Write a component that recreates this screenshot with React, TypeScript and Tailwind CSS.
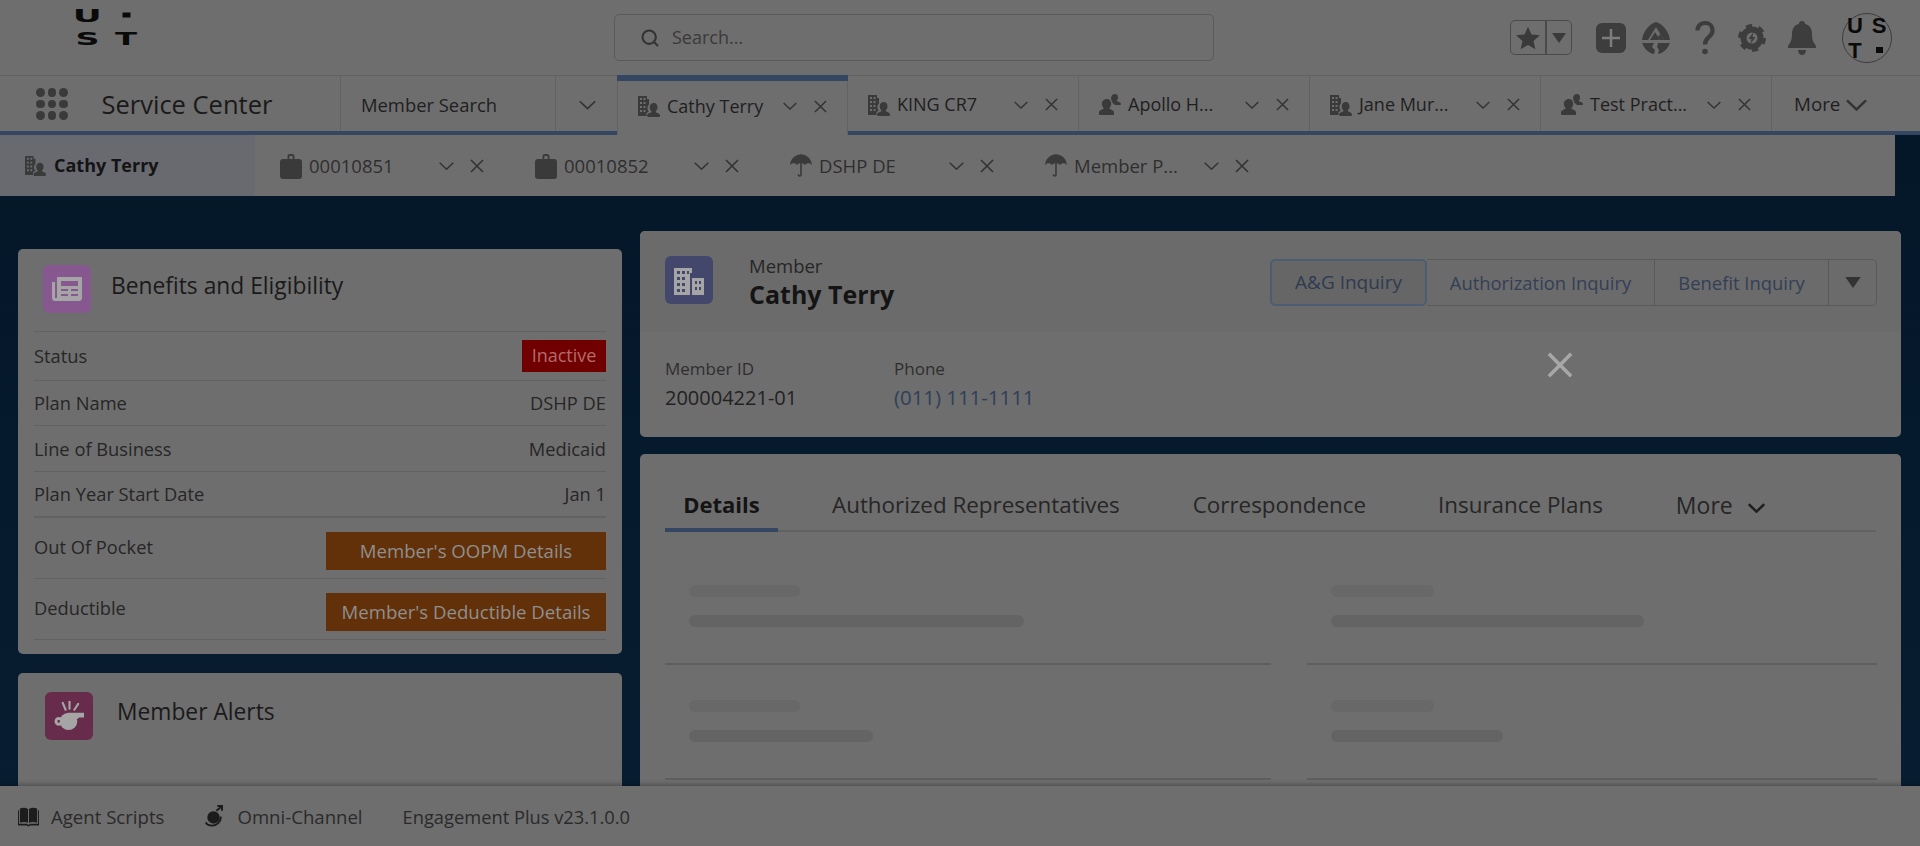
import React from 'react';
import { Search } from 'lucide-react';

const FONT = "font-['Open_Sans','Noto_Sans',sans-serif]";

const Chevron = ({ className = '', weight = 1.5 }: { className?: string; weight?: number }) => (
  <svg viewBox="0 0 15 8" className={`shrink-0 ${className}`} fill="none" stroke="currentColor" strokeWidth={weight}>
    <path d="M.7.7l6.800 6.500L14.300.7" />
  </svg>
);

const Cross = ({ className = '', weight = 1.6 }: { className?: string; weight?: number }) => (
  <svg viewBox="0 0 14 14" className={`shrink-0 ${className}`} fill="none" stroke="currentColor" strokeWidth={weight}>
    <path d="M1 1l12 12M13 1L1 13" />
  </svg>
);

const BuildingPerson = ({ className = '' }: { className?: string }) => (
  <svg viewBox="0 0 22 22" className={className} fill="currentColor">
    <path fillRule="evenodd" d="M0 1h9v3h2v5.500c-1.200 1-1.800 2.600-1.500 4.500.2 1.200.7 2 1.300 2.700-.7.400-1.600.800-2.300 1.300v3H0zM2 3v2h2V3zm3.500 0v2h2V3zM2 7v2h2V7zm3.500 0v2h2V7zM2 11v2h2v-2zm3.500 0v2h2v-2zM2 15v2h2v-2zm3.500 0v2h2v-2z" />
    <path d="M15.800 8c2.300 0 3.700 1.900 3.700 4.300 0 1.600-.7 2.900-1.500 3.800-.3.400-.3 1 .2 1.300 1.400.7 3.800 1 3.800 3.100 0 .8-.3 1.500-1 1.500H10.500c-.8 0-1.500-.6-1.500-1.400 0-2.100 2.600-2.500 4-3.200.5-.3.500-.9.200-1.300-.9-.9-1.500-2.200-1.500-3.800C11.700 9.900 13.400 8 15.800 8z" />
  </svg>
);

const PersonGroup = ({ className = '' }: { className?: string }) => (
  <svg viewBox="0 0 22 22" className={className} fill="currentColor">
    <path d="M16 0c1.900 0 3 1.500 3 3.400 0 1.200-.5 2.200-1.100 2.900-.3.400-.2.800.2 1 1.200.6 3.900 1 3.900 2.900 0 .5-.3.800-.9.800h-5.300c-.5-1-1.600-1.700-2.500-2.200-.2-.1-.3-.4-.1-.6.3-.3.200-.6 0-.9-.7-.7-1.100-1.700-1.100-2.900C12 1.500 13.900 0 16 0z" />
    <path d="M8 5c2.500 0 4.200 2 4.200 4.700 0 1.700-.7 3-1.500 4-.4.500-.3 1 .2 1.300 1.500.8 4.100 1.300 4.100 3.500v1.500c0 .6-.5 1-1 1H1c-.6 0-1-.4-1-1v-1.500c0-2.200 2.600-2.700 4.200-3.500.5-.3.600-.8.200-1.300-.9-1-1.500-2.300-1.500-4C2.900 7 5.400 5 8 5z" />
  </svg>
);

const Briefcase = ({ className = '' }: { className?: string }) => (
  <svg viewBox="0 0 22 26" className={className} fill="currentColor">
    <path d="M7.500 6V3.500C7.500 1.800 8.700 1 10 1h2c1.300 0 2.500.8 2.500 2.500V6h-1.800V3.800c0-.6-.4-.9-.9-.9h-1.600c-.5 0-.9.300-.9.900V6z" />
    <rect x="0" y="6" width="22" height="20" rx="3" />
  </svg>
);

const Umbrella = ({ className = '' }: { className?: string }) => (
  <svg viewBox="0 0 24 28" className={className} fill="currentColor">
    <path d="M11 1.500C11 .7 13 .7 13 1.500 19 2 23.500 6.500 24 13c-1.200-1.300-2.500-2-3.900-2-1.500 0-2.700.7-3.700 2-1-1.300-2.400-2-4.400-2s-3.400.7-4.400 2c-1-1.300-2.200-2-3.700-2C2.500 11 1.200 11.700 0 13 .5 6.500 5 2 11 1.500z" />
    <path d="M12 11v12.500c0 1.800-2.800 1.800-2.800 0" fill="none" stroke="currentColor" strokeWidth="1.800" strokeLinecap="round" />
  </svg>
);

const WorkspaceTab = ({ label, icon, active }: { label: string; icon: React.ReactNode; active?: boolean }) => (
  <div
    className={`w-[231px] flex items-center pl-5 pr-5 relative pt-[2px] ${
      active ? 'h-[60px] self-start -mt-px bg-[#6e6e6e] border-x border-[#626262] z-10' : 'h-full border-r border-[#626262]'
    }`}
  >
    {active && <div className="absolute top-0 -left-px -right-px h-[6px] bg-[#344661]" />}
    {icon}
    <span className="ml-[7px] flex-1 text-[18px] text-[#1f1f1f] whitespace-nowrap">{label}</span>
    <Chevron className="w-[14px] h-[8px] text-[#333333]" />
    <Cross className="w-[13px] h-[13px] ml-[17px] text-[#333333]" />
  </div>
);

const SubTab = ({ label, icon }: { label: string; icon: React.ReactNode }) => (
  <div className="w-[255px] h-full flex items-center pl-[25px] pr-[26px] shrink-0">
    {icon}
    <span className="ml-[7px] flex-1 text-[18.500px] text-[#2e2e2e] whitespace-nowrap">{label}</span>
    <Chevron className="w-[15px] h-[8px] text-[#333333]" />
    <Cross className="w-[14px] h-[14px] ml-4 text-[#333333]" />
  </div>
);

const Row = ({ label, value, height = 'h-[45.500px]' }: { label: string; value: React.ReactNode; height?: string }) => (
  <div className={`flex items-center justify-between ${height} border-t border-[#626262] text-[18.300px] text-[#262626]`}>
    <span>{label}</span>
    {value}
  </div>
);

const ActionRow = ({ label, action }: { label: string; action: string }) => (
  <div className="flex items-start justify-between h-[61px] border-t border-[#626262] text-[18.300px] text-[#262626]">
    <span className="mt-[15px]">{label}</span>
    <button className="mt-[14px] w-[280px] h-[38px] bg-[#623109] text-[#8f8f8f] text-[18.600px]">{action}</button>
  </div>
);

const Skeleton = ({ w1, w2, lineW, top }: { w1: string; w2: string; lineW: string; top: string }) => (
  <div className={`${lineW} ${top} border-b-2 border-[#5e5e5e] pl-6`}>
    <div className={`${w1} h-3 rounded-full bg-[#686868]`} />
    <div className={`${w2} h-3 mt-[18px] rounded-full bg-[#646464]`} />
  </div>
);

export default function App() {
  const bi = <BuildingPerson className="w-[22px] h-[22px] text-[#3a3a3a] shrink-0" />;
  const pg = <PersonGroup className="w-[22px] h-[22px] text-[#3a3a3a] shrink-0" />;
  const bc = <Briefcase className="w-[22px] h-[26px] text-[#3a3a3a] shrink-0" />;
  const um = <Umbrella className="w-[22px] h-[26px] text-[#3a3a3a] shrink-0" />;

  return (
    <div className={`${FONT} w-[1920px] h-[846px] overflow-hidden flex flex-col bg-[#6e6e6e] relative`}>
      {/* global header */}
      <header className="h-[75px] shrink-0 flex items-center relative">
        <div className="w-[614px] h-full pl-[72px]">
          {/* logo, wide lettering */}
          <svg viewBox="0 0 70 46" className="w-[70px] h-[46px] mt-[6px] font-['DejaVu_Sans',sans-serif] font-bold text-[18.400px]" fill="#0a0a0a">
            <text x="0.800" y="16" textLength="29" lengthAdjust="spacingAndGlyphs">U</text>
            <rect x="50.500" y="6.500" width="8" height="5" />
            <text x="3.500" y="38.500" textLength="24" lengthAdjust="spacingAndGlyphs">S</text>
            <text x="43" y="38.500" textLength="22" lengthAdjust="spacingAndGlyphs">T</text>
          </svg>
        </div>
        <div className="w-[600px] h-[47px] rounded-[5px] border border-[#5a5a5a] flex items-center pl-[25px]">
          <Search className="w-5 h-5 text-[#333333]" strokeWidth={2.500} />
          <span className="ml-3 text-[18px] text-[#3a3a3a]">Search...</span>
        </div>
        <div className="ml-[296px] w-[62px] h-[35px] rounded-[5px] border border-[#4a4a4a] flex text-[#3a3a3a]">
          <div className="w-9 flex items-center justify-center border-r-2 border-[#4a4a4a]">
            <svg viewBox="0 0 24 24" className="w-[26px] h-[26px]" fill="currentColor">
              <path d="M12 1.500l3.200 7.200 7.800.8-5.900 5.200 1.700 7.700L12 18.400l-6.800 4 1.700-7.700L1 9.500l7.800-.8z" />
            </svg>
          </div>
          <div className="flex-1 flex items-center justify-center">
            <svg viewBox="0 0 14 10" className="w-[14px] h-[10px]" fill="currentColor"><path d="M0 0h14L7 10z" /></svg>
          </div>
        </div>
        <div className="ml-6 w-[30px] h-[30px] rounded-[6px] bg-[#3d3d3d] flex items-center justify-center">
          <svg viewBox="0 0 20 20" className="w-5 h-5" fill="none" stroke="#7d7d7d" strokeWidth="2.500"><path d="M10 1v18M1 10h18" /></svg>
        </div>
        <svg viewBox="0 0 28 34" className="ml-4 w-7 h-[34px] text-[#3d3d3d]" fill="currentColor">
          <path d="M14 1C21 3 27 11 28 19H22L14 6 6 19H0C1 11 7 3 14 1z" />
          <path d="M13 11l-5 8h10zM18 13l-2 3 2.500 3H22z" />
          <path d="M0 22h12l-2 4 3 3-1 4C6 32 2 27 0 22zM16 22h12c-2 5-6 10-12 11l1-4-2-3z" />
        </svg>
        <svg viewBox="0 0 20 34" className="ml-[25px] w-[20px] h-[34px] text-[#3d3d3d]" fill="none" stroke="currentColor" strokeWidth="4.200">
          <path d="M2.500 9.500c0-10 15-10 15 0 0 7-7.500 6-7.500 14" />
          <circle cx="10" cy="30.500" r="2.800" fill="currentColor" stroke="none" />
        </svg>
        <svg viewBox="0 0 28 28" className="ml-[23px] w-7 h-7 text-[#3d3d3d]" fill="none" stroke="currentColor">
          <circle cx="14" cy="14" r="8.500" strokeWidth="6" />
          <circle cx="14" cy="14" r="12" strokeWidth="4" strokeDasharray="6 6.566" />
          <path d="M15.500 8l-5 7h3l-1 5 5-7h-3z" fill="currentColor" stroke="none" />
        </svg>
        <svg viewBox="0 0 28 34" className="ml-[22px] w-7 h-[34px] text-[#3d3d3d]" fill="currentColor">
          <path d="M14 0c2 0 3 1 3 3 5 1 7 5 7 10 0 7 2 9 4 12v2H0v-2c2-3 4-5 4-12 0-5 2-9 7-10 0-2 1-3 3-3zM10 29h8c0 3-2 5-4 5s-4-2-4-5z" />
        </svg>
        <div className="ml-[26px] w-[50px] h-[50px] rounded-full border border-[#3d3d3d] grid grid-cols-2 text-[#0a0a0a] font-['Liberation_Sans',sans-serif] font-bold text-[22px] leading-[25px] text-center content-center">
          <span>U</span>
          <span>S</span>
          <span>T</span>
          <span className="flex items-center justify-center"><span className="block w-[7px] h-[6px] bg-[#0a0a0a]" /></span>
        </div>
      </header>

      {/* app nav */}
      <nav className="h-[60px] shrink-0 border-t border-[#626262] border-b-4 border-b-[#344661] flex items-center">
        <div className="w-[341px] h-full flex items-center border-r border-[#626262] pl-9 pt-[1px]">
          <div className="grid grid-cols-3 gap-x-[3px] gap-y-[3px]">
            {Array.from({ length: 9 }).map((_, i) => (
              <span key={i} className="w-[8.500px] h-[8.500px] rounded-full bg-[#3a3a3a]" />
            ))}
          </div>
          <span className="ml-[34px] text-[25.500px] text-[#1a1a1a] whitespace-nowrap">Service Center</span>
        </div>
        <div className="w-[215px] h-full flex items-center border-r border-[#626262] pl-5 pt-[2px]">
          <span className="text-[18.400px] text-[#1f1f1f]">Member Search</span>
        </div>
        <div className="w-[61px] h-full flex items-center pl-[23px] pt-[2px]">
          <Chevron className="w-[17px] h-[10px] text-[#333333]" />
        </div>
        <WorkspaceTab label="Cathy Terry" icon={bi} active />
        <WorkspaceTab label="KING CR7" icon={bi} />
        <WorkspaceTab label="Apollo H..." icon={pg} />
        <WorkspaceTab label="Jane Mur..." icon={bi} />
        <WorkspaceTab label="Test Pract..." icon={pg} />
        <div className="pl-[22px] pt-[2px] flex items-center text-[18.800px] text-[#1f1f1f]">
          More
          <Chevron className="w-[21px] h-[12px] ml-[6px] text-[#333333]" weight={1.7} />
        </div>
      </nav>

      {/* body */}
      <div className="flex-1 min-h-0 overflow-hidden bg-gradient-to-b from-[#041729] to-[#091d32]">
        <div className="w-[1895px] h-[61px] bg-[#6e6e6e] flex items-center">
          <div className="w-[255px] h-full bg-[#686a70] flex items-center pl-[25px]">
            <BuildingPerson className="w-[21px] h-[21px] text-[#3a3a3a]" />
            <span className="ml-[8px] text-[18px] font-bold text-[#141414]">Cathy Terry</span>
          </div>
          <div className="flex h-full">
            <SubTab label="00010851" icon={bc} />
            <SubTab label="00010852" icon={bc} />
            <SubTab label="DSHP DE" icon={um} />
            <SubTab label="Member P..." icon={um} />
          </div>
        </div>

        <div className="flex items-start pl-[18px]">
          {/* left column */}
          <div className="w-[604px] mt-[53px] flex flex-col gap-[19px]">
            <section className="h-[405px] bg-[#6e6e6e] rounded-[5px] px-4">
              <div className="h-[82px] flex items-start pl-[9px] pt-[16px]">
                <div className="w-12 h-12 rounded-[6px] bg-[#86588f] flex items-center justify-center">
                  <svg viewBox="0 0 30 24" className="w-[30px] h-6" fill="#a5a5a5" fillRule="evenodd">
                    <path d="M5 0h25v21c0 1.700-1.300 3-3 3H3c-1.700 0-3-1.300-3-3V5h3v16h2zM9 4v5h17V4zm0 8v2h7v-2zm10 0v2h7v-2zM9 17v2h7v-2zm10 0v2h7v-2z" />
                  </svg>
                </div>
                <h2 className="ml-5 mt-[4px] text-[22.800px] text-[#1a1a1a]">Benefits and Eligibility</h2>
              </div>
              <Row
                height="h-[48.500px]"
                label="Status"
                value={<span className="w-[84px] h-8 bg-[#700000] text-[#b46a6a] text-[18px] flex items-center justify-center">Inactive</span>}
              />
              <Row label="Plan Name" value={<span>DSHP DE</span>} />
              <Row label="Line of Business" value={<span>Medicaid</span>} />
              <Row label="Plan Year Start Date" value={<span>Jan 1</span>} />
              <div className="border-t border-[#626262]" />
              <ActionRow label="Out Of Pocket" action="Member's OOPM Details" />
              <ActionRow label="Deductible" action="Member's Deductible Details" />
              <div className="border-t border-[#626262]" />
            </section>

            <section className="h-[200px] bg-[#6e6e6e] rounded-[5px] pl-[27px] pt-[19px] flex items-start">
              <div className="w-12 h-12 rounded-[6px] bg-[#672b4b] flex items-center justify-center">
                <svg viewBox="0 0 32 32" className="w-[31px] h-[31px]" fill="#a5a5a5" stroke="none">
                  <circle cx="15" cy="21" r="9" />
                  <path d="M15 12h16v5h-5l-4 3-7-3z" />
                  <path fillRule="evenodd" d="M5 16.500a4.500 4.500 0 110 9 4.500 4.500 0 010-9zm0 3a1.500 1.500 0 100 3 1.500 1.500 0 000-3z" />
                  <path d="M9 2l3 7M16 0v8M25 3l-4 6" stroke="#a5a5a5" strokeWidth="2.200" strokeLinecap="round" />
                </svg>
              </div>
              <h2 className="ml-6 mt-[3px] text-[22.800px] text-[#1a1a1a]">Member Alerts</h2>
            </section>
          </div>

          {/* right column */}
          <div className="w-[1261px] ml-[18px] mt-[35px] flex flex-col gap-[17px]">
            <section className="h-[206px] rounded-[5px] overflow-hidden bg-[#6e6e6e] relative">
              <div className="h-[101px] bg-[#6b6b6b] flex items-start pl-[25px] pr-6">
                <div className="mt-[25px] w-12 h-12 rounded-[6px] bg-[#43476b] flex items-center justify-center">
                  <svg viewBox="0 0 30 30" className="w-[30px] h-[30px]" fill="#a5a5a5" fillRule="evenodd">
                    <path d="M0 3h18v5h-2v22H0zM3 6v3h3V6zm5 0v3h3V6zm5 0v3h2V6zM3 12v3h3v-3zm5 0v3h3v-3zM3 18v3h3v-3zm5 0v3h3v-3zM3 24v3h3v-3zm5 0v3h3v-3z" />
                    <path d="M18 13h12v17H18zm3 3v3h2v-3zm4 0v3h2v-3zm-4 6v3h2v-3zm4 0v3h2v-3z" />
                  </svg>
                </div>
                <div className="ml-[36px] mt-[23px]">
                  <div className="text-[18.500px] leading-6 text-[#262626]">Member</div>
                  <div className="text-[25px] leading-8 font-bold text-[#141414]">Cathy Terry</div>
                </div>
                <div className="ml-auto mt-[28px] flex h-[47px] text-[18.400px] text-[#333f56]">
                  <button className="w-[157px] rounded-[5px] border-2 border-[#4c5d73] bg-[#666666] text-[#2f3a50] text-[19px]">A&amp;G Inquiry</button>
                  <button className="w-[228px] border-y border-r border-[#5a5a5a]">Authorization Inquiry</button>
                  <button className="w-[174px] border-y border-r border-[#5a5a5a]">Benefit Inquiry</button>
                  <button className="w-[48px] rounded-r-[5px] border-y border-r border-[#5a5a5a] flex items-center justify-center">
                    <svg viewBox="0 0 14 10" className="w-[16px] h-[11px]" fill="#333333"><path d="M0 0h14L7 10z" /></svg>
                  </button>
                </div>
              </div>
              <div className="flex pl-[25px] pt-[24px]">
                <div className="w-[229px]">
                  <div className="text-[17px] leading-[26px] text-[#2e2e2e]">Member ID</div>
                  <div className="text-[20px] leading-[31px] text-[#222222]">200004221-01</div>
                </div>
                <div>
                  <div className="text-[17px] leading-[26px] text-[#2e2e2e]">Phone</div>
                  <div className="text-[20.400px] leading-[31px] text-[#2e4059]">(011) 111-1111</div>
                </div>
              </div>
              {/* modal close button */}
              <Cross className="absolute left-[907px] top-[121px] w-[26px] h-[26px] text-[#a8a8a8]" weight={1.9} />
            </section>

            <section className="h-[340px] rounded-[5px] bg-[#6e6e6e] px-[25px] pt-[24px]">
              <div className="flex h-[54px] border-b-2 border-[#626262] text-[22.400px] text-[#262626]">
                <div className="w-[113px] h-[54px] border-b-4 border-[#344661] flex justify-center pt-[10px] text-[22px] font-bold text-[#141414]">Details</div>
                <div className="pt-[10px] ml-[54px]">Authorized Representatives</div>
                <div className="pt-[10px] ml-[73px]">Correspondence</div>
                <div className="pt-[10px] ml-[72px]">Insurance Plans</div>
                <div className="pt-[10px] ml-[73px] flex items-start text-[23px]">
                  More
                  <Chevron className="w-[17px] h-[10px] ml-[15px] mt-[15px] text-[#1f1f1f]" weight={2.2} />
                </div>
              </div>
              <div className="grid grid-cols-[606px_570px] gap-x-[36px]">
                <Skeleton top="h-[133px] pt-[53px]" w1="w-[111px]" w2="w-[335px]" lineW="w-[606px]" />
                <Skeleton top="h-[133px] pt-[53px]" w1="w-[103px]" w2="w-[313px]" lineW="w-[570px]" />
                <Skeleton top="h-[115px] pt-[35px]" w1="w-[111px]" w2="w-[184px]" lineW="w-[606px]" />
                <Skeleton top="h-[115px] pt-[35px]" w1="w-[103px]" w2="w-[172px]" lineW="w-[570px]" />
              </div>
            </section>
          </div>
        </div>
      </div>

      {/* utility bar */}
      <footer className="absolute bottom-0 left-0 w-full h-[60px] bg-[#6e6e6e] shadow-[0_-2px_4px_rgba(0,0,0,0.25)] flex items-center pl-[18px] pt-[1px] text-[18.600px] text-[#2a2a2a]">
        <svg viewBox="0 0 22 20" className="w-[21px] h-5 text-[#1c1c1c]" fill="currentColor">
          <path d="M2 1c3-1 6-1 8.500.5V16C8 15 5 15 2 16zM11.500 1.500C14 0 17 0 20 1v15c-3-1-6-1-8.500 0zM0 3h1v14h8.500l1.500 1.500 1.500-1.500H21V3h1v16h-9l-2 1-2-1H0z" />
        </svg>
        <span className="ml-3">Agent Scripts</span>
        <svg viewBox="0 0 20 24" className="ml-[40px] w-[19px] h-[23px] text-[#1c1c1c]" fill="none" stroke="currentColor" strokeWidth="2">
          <circle cx="10" cy="13" r="5.500" fill="currentColor" />
          <path d="M13 6l5-4M14 1h5v5M2 18c1 4 9 5 13 1 2-2 3-4 2.500-7" />
        </svg>
        <span className="ml-[14px]">Omni-Channel</span>
        <span className="ml-[40px] text-[18.300px]">Engagement Plus v23.1.0.0</span>
      </footer>
    </div>
  );
}
